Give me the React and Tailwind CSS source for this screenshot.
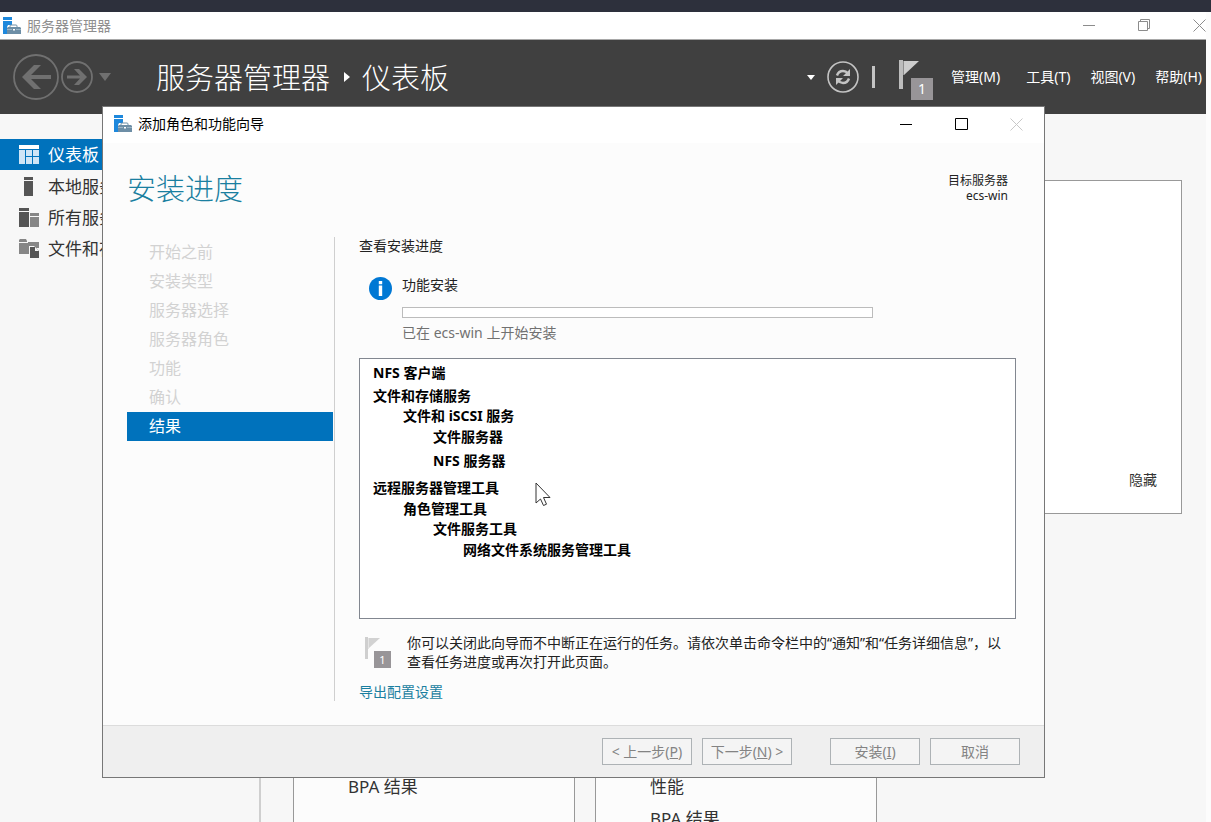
const steps = ["开始之前", "安装类型", "服务器选择", "服务器角色", "功能", "确认", "结果"];

const features = [
  { name: "NFS 客户端", className: "" },
  { name: "文件和存储服务", className: "mt-[3px]" },
  { name: "文件和 iSCSI 服务", className: "pl-[30px]" },
  { name: "文件服务器", className: "mt-px pl-[60px]" },
  { name: "NFS 服务器", className: "mt-1 pl-[60px]" },
  { name: "远程服务器管理工具", className: "mt-[7px]" },
  { name: "角色管理工具", className: "mt-px pl-[30px]" },
  { name: "文件服务工具", className: "pl-[60px]" },
  { name: "网络文件系统服务管理工具", className: "mt-px pl-[90px]" },
];

const AppIcon = () => (
  <svg width="18" height="18" viewBox="0 0 18 18" className="shrink-0">
    <path d="M0 0h9v3H0zM0 4h9v4H5l-1 2v7H0z" fill="#1e88dc" />
    <path d="M7 10.500V9q0-1 1-1h5q1 0 1 1v1.500" fill="none" stroke="#6d8ea6" />
    <path d="M5 10h12l1 1v6H4v-6z" fill="#6d8ea6" />
    <path d="M4 12.500h5M13 12.500h5" stroke="#9db6c6" />
    <path d="M10 12h2v1.500h-2z" fill="#fff" />
  </svg>
);

const DashboardIcon = () => (
  <svg width="20" height="19" viewBox="0 0 20 19">
    <path d="M0 0h20v4H0z" fill="#fff" />
    <path d="M0 5h6v14H0zM7 5h6v6H7zM14 5h6v6h-6zM7 12h6v7H7zM14 12h6v7h-6z" fill="#cfe5f6" />
  </svg>
);

const ServerIcon = () => (
  <svg width="20" height="19" viewBox="0 0 20 19">
    <path d="M5 0h9v3H5zM5 4h9v15H5z" fill="#555" />
  </svg>
);

const ServersIcon = () => (
  <svg width="20" height="19" viewBox="0 0 20 19">
    <path d="M0 0h10v3H0zM0 4h10v15H0z" fill="#555" />
    <path d="M11 5h9v3h-9zM11 9h9v10h-9z" fill="#868686" />
  </svg>
);

const StorageIcon = () => (
  <svg width="20" height="19" viewBox="0 0 20 19">
    <path d="M0 1l1-1h6l1 2v1H0zM0 4h9v11H0z" fill="#868686" />
    <path d="M9 3h11v6h-3l-2-2h-5v8H9z" fill="#868686" />
    <path d="M11 8h5l4 4v7h-9z" fill="#555" />
    <path d="M16 8l4 4h-4z" fill="#f7f7f7" />
  </svg>
);

const navItems = [
  { label: "仪表板", Icon: DashboardIcon, active: true },
  { label: "本地服务器", Icon: ServerIcon },
  { label: "所有服务器", Icon: ServersIcon },
  { label: "文件和存储服务", Icon: StorageIcon },
];

const MinimizeIcon = () => (
  <svg width="13" height="13" viewBox="0 0 13 13" stroke="currentColor">
    <path d="M0 6.500h12" />
  </svg>
);

const MaximizeIcon = () => (
  <svg width="13" height="13" viewBox="0 0 13 13" fill="none" stroke="currentColor">
    <path d="M.5.5h12v11H.5z" />
  </svg>
);

const RestoreIcon = () => (
  <svg width="13" height="13" viewBox="0 0 13 13" fill="none" stroke="currentColor">
    <path d="M.5 2.500h9v9h-9zM2.500 2.500v-2h9v9h-2" />
  </svg>
);

const CloseIcon = () => (
  <svg width="13" height="13" viewBox="0 0 13 13" stroke="currentColor">
    <path d="M.5.5l12 12M12.500.5l-12 12" />
  </svg>
);

const FlagIcon = () => (
  <svg width="20" height="29" viewBox="0 0 20 29">
    <path d="M0 0h4v29H0z" fill="#bdbdbd" />
    <path d="M4 1h1v14H4z" fill="#8e8e8e" />
    <path d="M5 1h15L5 15z" fill="#cdcdcd" />
  </svg>
);

const TitleBar = () => (
  <div className="flex h-7 items-center justify-between border-b border-[#a8a8a8] bg-white pl-[3px]">
    <div className="flex items-center gap-1.5 text-sm leading-none text-[#8f8f8f]">
      <AppIcon />
      <span>服务器管理器</span>
    </div>
    <div className="flex items-center gap-[42px] text-[#8c8c8c]">
      <button aria-label="最小化"><MinimizeIcon /></button>
      <button aria-label="还原"><RestoreIcon /></button>
      <button aria-label="关闭"><CloseIcon /></button>
    </div>
  </div>
);

const Header = () => (
  <header className="flex h-[74px] items-center justify-between bg-[#404040] pl-[13px] pr-1 text-white">
    <div className="flex items-center">
      <button aria-label="后退">
        <svg width="46" height="46" viewBox="0 0 46 46">
          <circle cx="23" cy="23" r="22" fill="none" stroke="#707070" strokeWidth="1.800" />
          <path d="M9 23l12-12h7L18 21h20v4H18l10 10h-7z" fill="#707070" />
        </svg>
      </button>
      <button aria-label="前进" className="ml-0.5">
        <svg width="32" height="32" viewBox="0 0 32 32">
          <circle cx="16" cy="16" r="15" fill="none" stroke="#707070" strokeWidth="1.800" />
          <path d="M26 16l-8 8h-5l6-6.500H6v-3h13L13 8h5z" fill="#707070" />
        </svg>
      </button>
      <button aria-label="历史记录" className="ml-1.5">
        <svg width="12" height="8" viewBox="0 0 12 8"><path d="M0 0h12L6 8z" fill="#707070" /></svg>
      </button>
      <h1 className="ml-[45px] flex items-center text-[29px] font-light leading-none">
        <span>服务器管理器</span>
        <svg width="6" height="10" viewBox="0 0 6 10" className="ml-3.5 mr-3"><path d="M0 0l6 5-6 5z" fill="#fff" /></svg>
        <span>仪表板</span>
      </h1>
    </div>
    <div className="flex items-center text-sm leading-none">
      <button aria-label="更多">
        <svg width="8" height="5" viewBox="0 0 8 5"><path d="M0 0h8L4 5z" fill="#fff" /></svg>
      </button>
      <button aria-label="刷新" className="ml-3">
        <svg width="32" height="32" viewBox="0 0 32 32">
          <circle cx="16" cy="16" r="15" fill="none" stroke="#c4c4c4" strokeWidth="1.600" />
          <path d="M10 14.500q1.500-4.500 6-4.500 3 0 5 2.500M22 17.500q-1.500 4.500-6 4.500-3 0-5-2.500" fill="none" stroke="#c4c4c4" strokeWidth="2.400" />
          <path d="M23 8v7h-7zM9 24v-7h7z" fill="#c4c4c4" />
        </svg>
      </button>
      <span className="ml-[13px] h-[22px] w-[3px] bg-[#c4c4c4]" />
      <button aria-label="通知" className="relative ml-6 h-[34px] w-[34px]">
        <span className="absolute left-0 top-0"><FlagIcon /></span>
        <span className="absolute -bottom-1.5 right-0 flex h-[22px] w-[22px] items-center justify-center bg-[#989598] text-sm">1</span>
      </button>
      <nav className="ml-[18px] flex items-center">
        <button>管理(M)</button>
        <button className="ml-[26px]">工具(T)</button>
        <button className="ml-5">视图(V)</button>
        <button className="ml-5">帮助(H)</button>
      </nav>
    </div>
  </header>
);

const Sidebar = () => (
  <nav className="w-[261px] shrink-0 border-r-2 border-[#cfcfcf] pt-[25px]">
    {navItems.map(({ label, Icon, active }) => (
      <a
        key={label}
        href="#"
        className={
          active
            ? "mb-px flex h-[31px] items-center gap-[9px] bg-[#0072bc] pl-[19px] text-[17px] leading-none text-white"
            : "flex h-[31px] items-center gap-[9px] pl-[19px] text-[17px] leading-none text-[#333]"
        }
      >
        <Icon />
        <span>{label}</span>
      </a>
    ))}
  </nav>
);

const Dashboard = () => (
  <main className="flex min-w-0 flex-1 flex-col pl-8 pr-6 pt-[66px] text-[#333]">
    <section className="flex h-[334px] shrink-0 items-end justify-end border border-[#999] bg-white pb-6 pr-6">
      <button className="text-sm leading-[18px]">隐藏</button>
    </section>
    <div className="mt-10 flex flex-1 gap-5 text-[17px]">
      <section className="flex w-[282px] flex-col border border-[#999] bg-[#fcfcfc] pl-[54px] pt-[216px]">
        <a href="#" className="leading-8">BPA 结果</a>
      </section>
      <section className="flex w-[282px] flex-col border border-[#999] bg-[#fcfcfc] pl-[54px] pt-[216px]">
        <a href="#" className="leading-8">性能</a>
        <a href="#" className="leading-8">BPA 结果</a>
      </section>
    </div>
  </main>
);

const WizardButton = ({ children, className = "" }) => (
  <button
    className={`h-[27px] w-[90px] whitespace-nowrap border border-[#adb2b5] bg-[#f4f4f4] text-sm leading-none text-[#838383] ${className}`}
  >
    {children}
  </button>
);

const Wizard = () => (
  <div
    role="dialog"
    aria-label="添加角色和功能向导"
    className="absolute left-[102px] right-[166px] top-[106px] border border-[#777] bg-[#fcfcfc] text-sm text-[#222]"
  >
    <div className="flex h-9 items-center justify-between bg-white pb-0.5 pl-[11px] pr-[21px] leading-none">
      <div className="flex items-center gap-1.5 text-black">
        <AppIcon />
        <span>添加角色和功能向导</span>
      </div>
      <div className="flex items-center gap-[42px] text-black">
        <button aria-label="最小化"><MinimizeIcon /></button>
        <button aria-label="最大化"><MaximizeIcon /></button>
        <button aria-label="关闭" className="text-[#c8c8c8]"><CloseIcon /></button>
      </div>
    </div>

    <div className="flex h-[94px] items-start justify-between pl-6 pr-9 pt-7">
      <h2 className="text-[29px] font-light leading-9 text-[#1a7fa0]">安装进度</h2>
      <p className="mt-0.5 text-right text-xs leading-[15px]">
        目标服务器
        <br />
        ecs-win
      </p>
    </div>

    <div className="flex pb-6 pl-6 pr-[23px]">
      <ol className="w-[206px] shrink-0 pt-px text-base leading-[29px] text-[#d2d2d2]">
        {steps.map((step) => (
          <li
            key={step}
            className={step === "结果" ? "bg-[#0072bc] pl-[22px] text-white" : "pl-[22px]"}
          >
            {step}
          </li>
        ))}
      </ol>
      <div className="ml-px min-w-0 flex-1 border-l border-[#cfcfcf] pl-6">
        <p className="leading-[18px]">查看安装进度</p>
        <div className="mt-[21px] flex pl-2.5">
          <svg width="23" height="23" viewBox="0 0 23 23" className="mt-px shrink-0">
            <circle cx="11.500" cy="11.500" r="11.500" fill="#0078d4" />
            <path d="M9.800 4h3.400v3.200H9.800zM9.800 8.600h3.400V19H9.800z" fill="#fff" />
          </svg>
          <div className="ml-2.5 w-[471px]">
            <p className="leading-[18px]">功能安装</p>
            <div className="mt-[13px] h-[11px] border border-[#bcbcbc] bg-white" role="progressbar" aria-label="功能安装" />
            <p className="mt-1.5 leading-[18px] text-[#717171]">已在 ecs-win 上开始安装</p>
          </div>
        </div>
        <ul className="mr-[5px] mt-4 h-[261px] border border-[#828790] bg-white pl-[13px] pt-1 font-bold leading-5 text-black">
          {features.map(({ name, className }) => (
            <li key={name} className={className}>{name}</li>
          ))}
        </ul>
        <div className="mt-3.5 flex">
          <div className="relative ml-1.5 mt-0.5 h-[34px] w-[42px] shrink-0">
            <svg width="25" height="32" viewBox="0 0 25 32">
              <path d="M0 2h3v22H0z" fill="#cfcfcf" />
              <path d="M3 3h1v11H3z" fill="#e4e4e4" />
              <path d="M4 3h11L4 13z" fill="#d2d2d2" />
            </svg>
            <span className="absolute left-[9px] top-4 flex h-[17px] w-[17px] items-center justify-center bg-[#989598] text-[11px] leading-none text-white">1</span>
          </div>
          <p className="mr-2 leading-[19px]">
            你可以关闭此向导而不中断正在运行的任务。请依次单击命令栏中的“通知”和“任务详细信息”，以查看任务进度或再次打开此页面。
          </p>
        </div>
        <a href="#" className="mt-3 block leading-[18px] text-[#1a7fa0]">导出配置设置</a>
      </div>
    </div>

    <div className="flex h-[52px] items-center justify-end border-t border-[#dcdcdc] bg-[#efefef] pr-6">
      <WizardButton>&lt; 上一步(<u>P</u>)</WizardButton>
      <WizardButton className="ml-2.5">下一步(<u>N</u>) &gt;</WizardButton>
      <WizardButton className="ml-[38px]">安装(<u>I</u>)</WizardButton>
      <WizardButton className="ml-2.5">取消</WizardButton>
    </div>

    <svg width="16" height="25" viewBox="0 0 16 25" className="absolute left-[432px] top-[375px]">
      <path d="M1 1v20l4.500-4 3 6.500 3-1.300-3-6.700H15z" fill="#fff" stroke="#333" />
    </svg>
  </div>
);

export default function App() {
  return (
    <div className="relative flex h-screen flex-col overflow-hidden bg-[#fcfcfc] font-['Noto_Sans','Noto_Sans_CJK_SC',sans-serif]">
      <div className="h-3 shrink-0 bg-[#2d303c]" />
      <div className="mr-[5px] flex min-h-0 flex-1 flex-col bg-[#f7f7f7]">
        <TitleBar />
        <Header />
        <div className="flex min-h-0 flex-1">
          <Sidebar />
          <Dashboard />
        </div>
      </div>
      <Wizard />
    </div>
  );
}
